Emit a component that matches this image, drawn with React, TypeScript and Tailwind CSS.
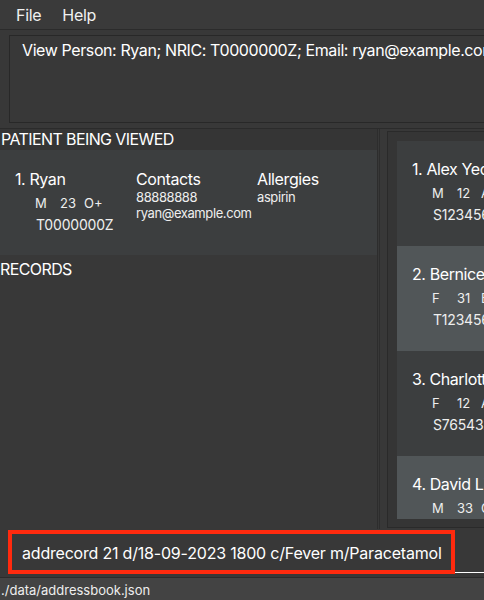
import React from "react";

type Person = {
  name: string;
  gender: string;
  age: string;
  blood: string;
  nric: string;
};

const people: Person[] = [
  { name: "Alex Yeoh", gender: "M", age: "12", blood: "A+", nric: "S1234567A" },
  { name: "Bernice Yu", gender: "F", age: "31", blood: "B+", nric: "T1234567B" },
  { name: "Charlotte Oliveiro", gender: "F", age: "12", blood: "AB+", nric: "S7654321C" },
  { name: "David Li", gender: "M", age: "33", blood: "O-", nric: "T7654321D" },
];

const NameColumn = ({ index, person }: { index: number; person: Person }) => (
  <div className="flex flex-col whitespace-nowrap">
    <div className="text-[16px] leading-[20px] tracking-[-0.4px] text-white">
      {index}. {person.name}
    </div>
    <div className="mt-[6px] pl-[20px] flex text-[13px] leading-[16px] text-[#eeeeee]">
      <span className="w-[25px]">{person.gender}</span>
      <span className="w-[24px]">{person.age}</span>
      <span>{person.blood}</span>
    </div>
    <div className="mt-[5px] pl-[21px] text-[14px] leading-[18px] tracking-[-0.2px] text-[#eeeeee]">
      {person.nric}
    </div>
  </div>
);

const App = () => {
  return (
    <div
      className="w-[484px] h-[600px] overflow-hidden bg-[#383838] flex flex-col text-white"
      style={{ fontFamily: "Inter, 'Noto Sans', sans-serif" }}
    >
      {/* menu */}
      <div className="h-[30px] shrink-0 flex items-center gap-[21px] pl-[16px] border-b border-[#2b2b2b] bg-[#3a3a3a] text-[16px] tracking-[-0.3px] text-[#f0f0f0]">
        <span>File</span>
        <span>Help</span>
      </div>

      {/* result display */}
      <div className="h-[99px] shrink-0 border-b border-[#2b2b2b] pl-[9px] pt-[5px]">
        <div className="w-[560px] h-[88px] border border-[#282828] bg-[#383838] pl-[12px] pt-[4px] text-[16px] leading-[20px] tracking-[-0.4px] whitespace-nowrap">
          View Person: Ryan; NRIC: T0000000Z; Email: ryan@example.com
        </div>
      </div>

      {/* main */}
      <div className="h-[400px] shrink-0 flex">
        <div className="w-[378px] shrink-0 border-r border-[#2d2d2d] flex flex-col">
          <div className="h-[21px] bg-[#353535] text-[16px] leading-[20px] tracking-[-0.6px] pl-[1px]">
            PATIENT BEING VIEWED
          </div>
          <div className="h-[105px] bg-[#3c3e3f] pl-[15px] pt-[19px] flex">
            <div className="w-[121px]">
              <NameColumn
                index={1}
                person={{ name: "Ryan", gender: "M", age: "23", blood: "O+", nric: "T0000000Z" }}
              />
            </div>
            <div className="w-[121px] flex flex-col">
              <div className="text-[16px] leading-[20px] tracking-[-0.4px]">Contacts</div>
              <div className="text-[13px] leading-[16px] tracking-[-0.4px] text-[#eeeeee]">88888888</div>
              <div className="text-[13px] leading-[16px] tracking-[-0.4px] text-[#eeeeee]">ryan@example.com</div>
            </div>
            <div className="flex flex-col">
              <div className="text-[16px] leading-[20px] tracking-[-0.4px]">Allergies</div>
              <div className="text-[13px] leading-[16px] tracking-[-0.4px] text-[#eeeeee]">aspirin</div>
            </div>
          </div>
          <div className="pt-[4px] text-[16px] leading-[20px] tracking-[-0.6px]">RECORDS</div>
        </div>

        <div className="ml-[1px] flex-1 border-l border-[#2d2d2d] pl-[7px] pt-[2px]">
          <div className="w-[200px] h-[397px] border border-[#2a2a2a] bg-[#353535] pl-[9px] pt-[9px]">
            <div className="h-[378px] overflow-hidden flex flex-col">
              {people.map((p, i) => (
                <div
                  key={p.nric}
                  className={`h-[105px] shrink-0 pl-[15px] pt-[18px] ${
                    i % 2 === 0 ? "bg-[#3c3e3f]" : "bg-[#515658]"
                  }`}
                >
                  <NameColumn index={i + 1} person={p} />
                </div>
              ))}
            </div>
          </div>
        </div>
      </div>

      {/* command box */}
      <div className="h-[48px] shrink-0 flex items-start pt-[1px]">
        <div className="ml-[8px] w-[447px] h-[44px] border-[4px] border-[#ff2a0e] bg-[#383838] flex items-center pl-[10px] pt-[2px] text-[16px] leading-[20px] tracking-[-0.2px] whitespace-nowrap">
          addrecord 21 d/18-09-2023 1800 c/Fever m/Paracetamol
        </div>
        <div className="flex-1 h-[43px] border-b border-white" />
      </div>

      {/* status bar */}
      <div className="flex-1 border-t border-[#2b2b2b] bg-[#434343] pl-[1px] pt-[4px] text-[13px] leading-[17px] text-[#eeeeee]">
        ./data/addressbook.json
      </div>
    </div>
  );
};

export default App;
